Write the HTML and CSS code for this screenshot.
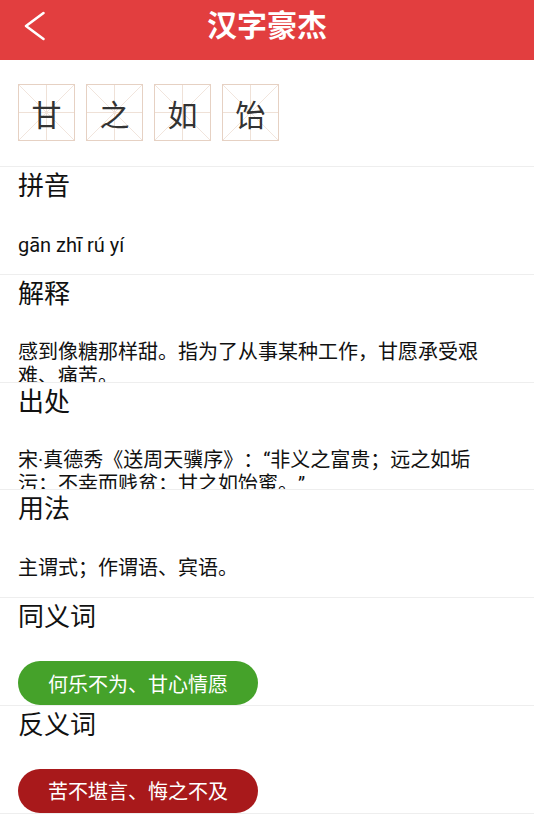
FILE: index.html
```html
<!DOCTYPE html>
<html lang="zh-CN">
<head>
    <meta charset="UTF-8">
    <meta name="viewport" content="width=device-width, initial-scale=1.0">
    <title>汉字豪杰</title>
    <link rel="stylesheet" href="styles.css">
</head>
<body>

    <!-- Header -->
    <div class="header">
        <a class="back" href="#">
            <svg width="22" height="30" viewBox="0 0 22 30">
                <polyline points="19.5,2 2,15 19.5,28" fill="none" stroke="#fff" stroke-width="2.6" stroke-linecap="round" stroke-linejoin="round"/>
            </svg>
        </a>
        <h1 class="title">汉字豪杰</h1>
        <span></span>
    </div>

    <!-- Characters -->
    <div class="tiles">
        <div class="tile">甘</div>
        <div class="tile">之</div>
        <div class="tile">如</div>
        <div class="tile">饴</div>
    </div>

    <!-- Details -->
    <div class="sections">
        <div class="section">
            <h2 class="section-title">拼音</h2>
            <p class="section-text">gān zhī rú yí</p>
        </div>
        <div class="section">
            <h2 class="section-title">解释</h2>
            <p class="section-text">感到像糖那样甜。指为了从事某种工作，甘愿承受艰难、痛苦。</p>
        </div>
        <div class="section">
            <h2 class="section-title">出处</h2>
            <p class="section-text">宋·真德秀《送周天骥序》：“非义之富贵；远之如垢污；不幸而贱贫；甘之如饴蜜。”</p>
        </div>
        <div class="section">
            <h2 class="section-title">用法</h2>
            <p class="section-text">主谓式；作谓语、宾语。</p>
        </div>
        <div class="section">
            <h2 class="section-title">同义词</h2>
            <div class="tag tag-green">何乐不为、甘心情愿</div>
        </div>
        <div class="section">
            <h2 class="section-title">反义词</h2>
            <div class="tag tag-red">苦不堪言、悔之不及</div>
        </div>
    </div>

</body>
</html>
```

FILE: styles.css
```css
body {
    margin: 0;
    font-family: Roboto, "Noto Sans CJK SC", sans-serif;
    color: #111;
    background: #fff;
    text-spacing-trim: space-all;
}

/* Header */
.header {
    display: grid;
    grid-template-columns: 1fr auto 1fr;
    align-items: center;
    height: 52px;
    padding-bottom: 8px;
    background: #e23e3f;
}
.back {
    display: flex;
    padding-left: 24px;
}
.title {
    margin: 0;
    color: #fff;
    font-size: 30px;
    font-weight: bold;
    line-height: 52px;
}

/* Characters */
.tiles {
    display: flex;
    gap: 11px;
    padding: 24px 18px 25px;
}
.tile {
    width: 57px;
    height: 57px;
    box-sizing: border-box;
    border: 1px solid #e6d1c3;
    display: flex;
    align-items: center;
    justify-content: center;
    font-size: 30px;
    color: #333;
    background:
        linear-gradient(to right, transparent calc(50% - 0.5px), #efe1d7 calc(50% - 0.5px), #efe1d7 calc(50% + 0.5px), transparent calc(50% + 0.5px)),
        linear-gradient(to bottom, transparent calc(50% - 0.5px), #efe1d7 calc(50% - 0.5px), #efe1d7 calc(50% + 0.5px), transparent calc(50% + 0.5px)),
        linear-gradient(45deg, transparent calc(50% - 0.6px), #f1e5dd calc(50% - 0.6px), #f1e5dd calc(50% + 0.6px), transparent calc(50% + 0.6px)),
        linear-gradient(-45deg, transparent calc(50% - 0.6px), #f1e5dd calc(50% - 0.6px), #f1e5dd calc(50% + 0.6px), transparent calc(50% + 0.6px));
}

/* Details */
.sections {
    border-bottom: 1px solid #eeeeee;
}
.section {
    height: 107.8px;
    box-sizing: border-box;
    border-top: 1px solid #eeeeee;
    padding: 0 18px;
    overflow: hidden;
}
.section-title {
    margin: 0;
    height: 38px;
    font-size: 26px;
    font-weight: normal;
    line-height: 38px;
    color: #111;
}
.section-text {
    margin: 27.5px 0 0;
    max-width: 466px;
    font-size: 20px;
    line-height: 24px;
}
.tag {
    margin-top: 25px;
    width: 240px;
    height: 44px;
    border-radius: 22px;
    display: flex;
    align-items: center;
    justify-content: center;
    color: #fff;
    font-size: 20px;
}
.tag-green {
    background: #45a22a;
}
.tag-red {
    background: #a8191b;
}
```
